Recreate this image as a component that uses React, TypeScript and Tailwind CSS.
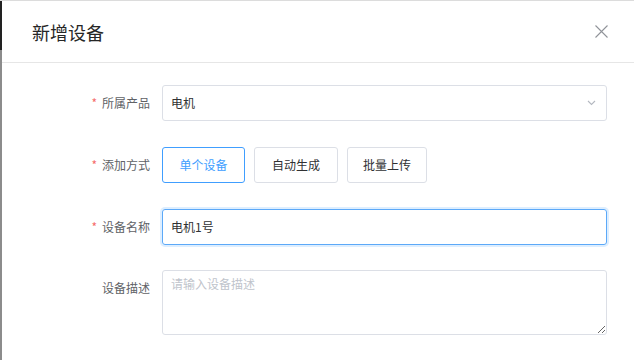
import React from "react";

const font = { fontFamily: '"Noto Sans CJK SC", "Noto Sans", sans-serif' };

function Label({ text, required }: { text: string; required?: boolean }) {
  return (
    <div className="w-[160px] shrink-0 pr-[12px] flex justify-end items-center h-[36px] text-[12px] text-[#606266]">
      {required && <span className="text-[#f56c6c] mr-[5px] text-[12px]">*</span>}
      <span>{text}</span>
    </div>
  );
}

export default function App() {
  return (
    <div className="w-[634px] h-[360px] bg-white overflow-hidden border-t border-[#dcdcdc]" style={font}>
      <div className="flex h-[359px]">
        <div className="w-[2px] shrink-0 flex flex-col">
          <div className="h-[49px] bg-[#222222]" />
          <div className="flex-1 bg-[#8c8c8c]" />
        </div>
        <div className="flex-1 flex flex-col">
          <div className="h-[62px] border-b border-[#e6e6e6] flex items-center justify-between pl-[30px] pr-[26px] shrink-0">
            <span className="text-[18px] text-[#262626] leading-none">新增设备</span>
            <svg width="13" height="13" viewBox="0 0 13 13" className="text-[#909399]">
              <path d="M0.5 0.5 L12.5 12.5 M12.5 0.5 L0.5 12.5" stroke="currentColor" strokeWidth="1.1" fill="none" />
            </svg>
          </div>
          <div className="flex flex-col pt-[22px]">
            <div className="flex items-center">
              <Label text="所属产品" required />
              <div className="w-[445px] h-[36px] border border-[#dcdfe6] rounded-[3px] flex items-center justify-between pl-[8px] pr-[10px] text-[12px] text-[#303133]">
                <span>电机</span>
                <svg width="9" height="6" viewBox="0 0 9 6">
                  <path d="M1 1 L4.5 4.5 L8 1" stroke="#b4b8c0" strokeWidth="1.1" fill="none" />
                </svg>
              </div>
            </div>
            <div className="flex items-center mt-[26px]">
              <Label text="添加方式" required />
              <div className="flex">
                <div className="w-[83px] h-[36px] border border-[#409eff] rounded-[3px] flex items-center justify-center text-[12px] text-[#409eff]">单个设备</div>
                <div className="w-[84px] h-[36px] ml-[9px] border border-[#dcdfe6] rounded-[3px] flex items-center justify-center text-[12px] text-[#303133]">自动生成</div>
                <div className="w-[80px] h-[36px] ml-[9px] border border-[#dcdfe6] rounded-[3px] flex items-center justify-center text-[12px] text-[#303133]">批量上传</div>
              </div>
            </div>
            <div className="flex items-center mt-[26px]">
              <Label text="设备名称" required />
              <div className="w-[445px] h-[36px] border border-[#5ca9f8] rounded-[3px] shadow-[0_0_0_2px_rgba(64,158,255,0.18)] flex items-center pl-[8px] text-[12px] text-[#303133]">
                电机1号
              </div>
            </div>
            <div className="flex items-start mt-[25px]">
              <Label text="设备描述" />
              <textarea
                placeholder="请输入设备描述"
                className="w-[445px] h-[65px] border border-[#dcdfe6] rounded-[3px] px-[8px] pt-[4px] leading-[18px] text-[12px] text-[#303133] placeholder:text-[#c0c4cc] outline-none"
                style={font}
              />
            </div>
          </div>
        </div>
      </div>
    </div>
  );
}
